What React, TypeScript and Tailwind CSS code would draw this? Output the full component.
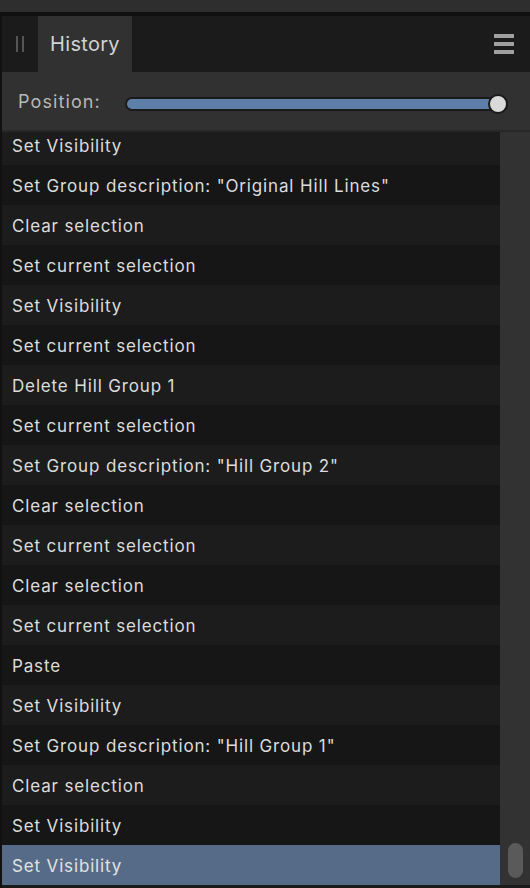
import { useState } from "react";

const items = [
  "Set Visibility",
  'Set Group description: "Original Hill Lines"',
  "Clear selection",
  "Set current selection",
  "Set Visibility",
  "Set current selection",
  "Delete Hill Group 1",
  "Set current selection",
  'Set Group description: "Hill Group 2"',
  "Clear selection",
  "Set current selection",
  "Clear selection",
  "Set current selection",
  "Paste",
  "Set Visibility",
  'Set Group description: "Hill Group 1"',
  "Clear selection",
  "Set Visibility",
  "Set Visibility",
];

export default function App() {
  const [selected, setSelected] = useState(items.length - 1);

  return (
    <div
      className="w-[530px] h-[888px] bg-[#111111] flex flex-col overflow-hidden text-[#dcdcdc]"
      style={{ fontFamily: "Inter, 'Noto Sans', sans-serif" }}
    >
      <div className="h-[12px] bg-[#2e2e2e] shrink-0" />
      <div className="h-[4px] bg-[#101010] shrink-0" />

      <div className="flex-1 flex flex-col pl-[2px] min-h-0">
        {/* header with tab */}
        <div className="h-[56px] flex bg-[#1b1b1b] shrink-0">
          <div className="w-[36px] flex items-center justify-center gap-[4px]">
            <span className="w-[2px] h-[16px] bg-[#555555]" />
            <span className="w-[2px] h-[16px] bg-[#555555]" />
          </div>
          <div className="w-[94px] bg-[#313131] flex items-center justify-center text-[20px] text-[#d2d2d2] tracking-[0.3px]">
            History
          </div>
          <div className="flex-1" />
          <div className="w-[20px] mr-[16px] flex flex-col justify-center gap-[4px]">
            <span className="h-[4px] bg-[#a0a0a0]" />
            <span className="h-[4px] bg-[#a0a0a0]" />
            <span className="h-[4px] bg-[#a0a0a0]" />
          </div>
        </div>

        {/* position slider */}
        <div className="h-[58px] bg-[#313131] flex items-center pl-[16px] pr-[22px] shrink-0">
          <span className="text-[18px] text-[#b8b8b8] w-[107px] tracking-[1.1px]">Position:</span>
          <div className="flex-1 relative h-[14px] mt-[6px] rounded-full bg-[#1a1a1a] p-[2px]">
            <div className="h-full rounded-full bg-[#5e7fa8]" />
            <div className="absolute right-0 top-[-3px] w-[20px] h-[20px] rounded-full bg-[#d9d9d9] border-[2px] border-[#1a1a1a]" />
          </div>
        </div>
        <div className="h-[2px] bg-[#282828] shrink-0" />

        {/* list + scrollbar */}
        <div className="flex-1 flex min-h-0">
          <div className="flex-1 flex flex-col justify-end overflow-hidden">
            {items.map((label, i) => (
              <div
                key={i}
                onClick={() => setSelected(i)}
                className={`h-[40px] shrink-0 flex items-center pl-[10px] pt-[3px] text-[17px] tracking-[0.85px] ${
                  i === selected
                    ? "bg-[#566b88] text-[#e2e2e2]"
                    : i % 2 === 0
                    ? "bg-[#1c1c1c]"
                    : "bg-[#161616]"
                }`}
              >
                {label}
              </div>
            ))}
          </div>
          <div className="w-[30px] bg-[#323232] flex flex-col justify-end items-center pb-[7px]">
            <div className="w-[15px] h-[35px] rounded-full bg-[#5a5a5a]" />
          </div>
        </div>
        <div className="h-[3px] bg-[#1a1a1a] shrink-0" />
      </div>
    </div>
  );
}
